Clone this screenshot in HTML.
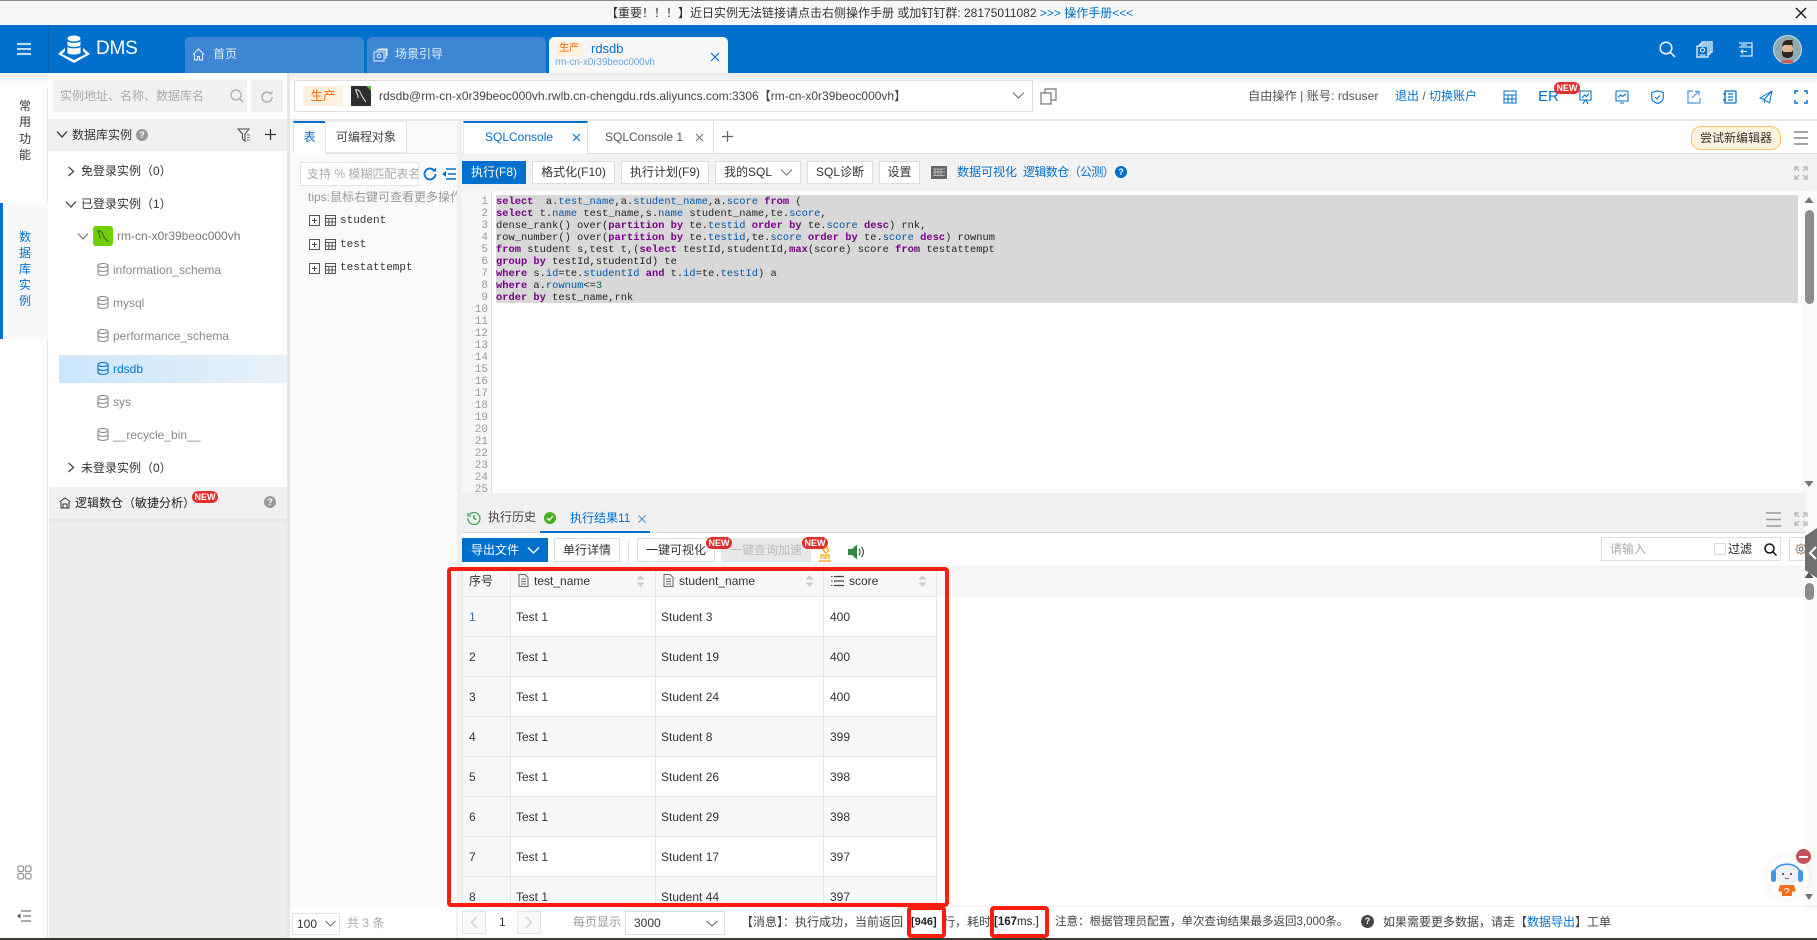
<!DOCTYPE html>
<html lang="zh"><head><meta charset="utf-8"><title>DMS</title>
<style>
*{box-sizing:border-box}
html,body{margin:0;padding:0;width:1817px;height:940px;overflow:hidden;background:#fff;font-family:"Liberation Sans","Noto Sans CJK SC",sans-serif;font-size:12px;color:#333}
.a,.t,svg{position:absolute}
.t{white-space:nowrap;line-height:16px}
.btn{position:absolute;top:161px;height:23px;background:#fff;border:1px solid #ddd;text-align:center;line-height:21px;white-space:nowrap;color:#333;font-size:12px}
.new{position:absolute;width:26px;height:12px;border-radius:6px;background:#e0302c;color:#fff;font-size:9px;font-weight:bold;line-height:12px;text-align:center}
.b{color:#0070cc}
.g{color:#888}
.hl{position:absolute;background:#e3e6ec}
.cell{position:absolute;white-space:nowrap;line-height:16px;color:#333}
.sql{position:absolute;left:496px;margin-top:1px;white-space:pre;font-family:"Liberation Mono",monospace;font-size:10.4px;line-height:12px;color:#222;height:12px}
.sql b{color:#708}.sql i{font-style:normal;color:#05a}.sql u{text-decoration:none;color:#164}
.ln{position:absolute;left:462px;margin-top:1px;width:26px;text-align:right;color:#999;font-family:"Liberation Mono",monospace;font-size:11px;line-height:12px;height:12px}
.red{position:absolute;border:4.5px solid #fb1d10;border-radius:4px}
</style></head><body>

<!-- notice -->
<div class="a" style="left:0;top:0;width:1817px;height:25px;background:#f7f7f7;border-top:1px solid #888"></div>
<div class="t" style="left:606px;top:5px;font-size:12px;color:#333">【重要！！！】近日实例无法链接请点击右侧操作手册 或加钉钉群: 28175011082 <span class="b">&gt;&gt;&gt; 操作手册&lt;&lt;&lt;</span></div>
<svg style="left:1795px;top:7px" width="12" height="12" viewBox="0 0 12 12"><path d="M1 1L11 11M11 1L1 11" stroke="#222" stroke-width="1.5" fill="none"/></svg>

<!-- header -->
<div class="a" style="left:0;top:25px;width:1817px;height:48px;background:#0070cc"></div>
<div class="a" style="left:48px;top:25px;width:1px;height:48px;background:#0f63ad"></div>
<svg style="left:17px;top:42px" width="15" height="14" viewBox="0 0 15 14"><path d="M0 2H14M0 7H14M0 12H14" stroke="#fff" stroke-width="1.6"/></svg>
<svg style="left:58px;top:35px" width="33" height="28" viewBox="0 0 33 28" fill="#fff"><ellipse cx="16" cy="3.5" rx="6.5" ry="3"/><path d="M9.5 6c1 2.500 12 2.500 13 0v4c-1 2.500-12 2.500-13 0z"/><path d="M9.500 11.500c1 2.500 12 2.500 13 0V18c-1 2-12 2-13 0z"/><path d="M7 13L0 19l16 9 16-9-7-6v3l3 3-12 6-12-6 3-3z"/></svg>
<div class="t" style="left:96px;top:37px;font-size:19px;line-height:24px;color:#fff;letter-spacing:-.2px">DMS</div>

<div class="a" style="left:185px;top:37px;width:179px;height:36px;background:#3c86d3;border-radius:5px 5px 0 0"></div>
<svg style="left:192px;top:48px" width="13" height="13" viewBox="0 0 13 13"><path d="M1 6.500L6.500 1 12 6.500M2.500 6v6h3V8.500h2V12h3V6" stroke="#e6f0fa" fill="none" stroke-width="1.100"/></svg>
<div class="t" style="left:213px;top:46px;font-size:12px;color:#e3eefa">首页</div>
<div class="a" style="left:367px;top:37px;width:179px;height:36px;background:#3c86d3;border-radius:5px 5px 0 0"></div>
<svg style="left:373px;top:48px" width="15" height="14" viewBox="0 0 15 14"><path d="M1 4h10v9H1zM4 4V2h9v8h-2M6 2V1h8v7" stroke="#e6f0fa" fill="none"/><circle cx="6" cy="8" r="1.800" stroke="#e6f0fa" fill="none"/></svg>
<div class="t" style="left:395px;top:46px;font-size:12px;color:#e3eefa">场景引导</div>
<div class="a" style="left:549px;top:37px;width:179px;height:36px;background:#f7f7f7;border-radius:5px 5px 0 0"></div>
<div class="a" style="left:555px;top:42px;width:28px;height:14px;background:#fff1e0;color:#f60;font-size:10px;line-height:14px;text-align:center">生产</div>
<div class="t" style="left:591px;top:41px;font-size:13px;color:#0070cc">rdsdb</div>
<div class="t" style="left:555px;top:55px;font-size:10px;color:#6aa9de;letter-spacing:-.15px">rm-cn-x0r39beoc000vh</div>
<svg style="left:710px;top:52px" width="10" height="10" viewBox="0 0 10 10"><path d="M1 1L9 9M9 1L1 9" stroke="#0070cc" stroke-width="1.200"/></svg>

<svg style="left:1659px;top:41px" width="17" height="17" viewBox="0 0 17 17"><circle cx="7" cy="7" r="5.800" stroke="#fff" stroke-width="1.500" fill="none"/><path d="M11 11L16 16" stroke="#fff" stroke-width="1.500"/></svg>
<svg style="left:1696px;top:41px" width="17" height="17" viewBox="0 0 17 17"><path d="M1 5h11v11H1zM4 5V3h10v10h-2M6 3V1h10v10h-2" stroke="#fff" fill="none" stroke-width="1.200"/><circle cx="6.500" cy="9" r="2" stroke="#fff" fill="none"/><path d="M3.500 14h6" stroke="#fff"/></svg>
<svg style="left:1738px;top:42px" width="15" height="15" viewBox="0 0 15 15"><path d="M1 1h13v13H2M1 5h13M3 3h6M9 9.500H3M5 7.500L3 9.500l2 2" stroke="#fff" fill="none" stroke-width="1.100"/></svg>
<svg style="left:1773px;top:35px" width="29" height="29" viewBox="0 0 29 29"><circle cx="14.500" cy="14.500" r="14" fill="#8fa9ad" stroke="#cfe0ea"/><path d="M8 27c1-3 12-3 13 0-3 2-10 2-13 0z" fill="#d2554f"/><path d="M9 10c0-3 3-5 5-5h5l-1 2c1 1 2 2 2 4v5c0 5-2 7-5.500 7S9 21 9 16z" fill="#e4b48f"/><path d="M9 12c0-5 3-7 6-7h5l-1 2c1 1 1 3 1 5l-1-2h-8z" fill="#2a2626"/><path d="M9 15c1 2 2 2 3 2h5c1 0 2 0 3-2v3c0 4-3 5-5.500 5S9 22 9 18z" fill="#2a2626"/></svg>

<!-- rail -->
<div class="a" style="left:0;top:73px;width:48px;height:865px;background:#fff;border-right:1px solid #e6e6e6"></div>
<div class="a" style="left:0;top:73px;width:48px;height:14px;background:linear-gradient(#eee,#fff)"></div>
<div class="a" style="left:0;top:203px;width:48px;height:136px;background:#f9f9f9"></div>
<div class="a" style="left:0;top:203px;width:3px;height:136px;background:#0070cc"></div>
<div class="t" style="left:19px;top:98px;width:13px;font-size:12px;line-height:16.300px;white-space:normal;color:#333">常用功能</div>
<div class="t" style="left:19px;top:229px;width:13px;font-size:12px;line-height:16.100px;white-space:normal;color:#0070cc">数据库实例</div>
<svg style="left:17px;top:865px" width="15" height="15" viewBox="0 0 15 15"><g stroke="#999" stroke-width="1.300" fill="none"><rect x="1" y="1" width="5.500" height="5.500" rx="1.500"/><rect x="8.500" y="1" width="5.500" height="5.500" rx="1.500"/><rect x="1" y="8.500" width="5.500" height="5.500" rx="1.500"/><rect x="8.500" y="8.500" width="5.500" height="5.500" rx="1.500"/></g></svg>
<svg style="left:17px;top:910px" width="15" height="12" viewBox="0 0 15 12"><path d="M4 1H14M6 6H14M4 11H14" stroke="#555"/><path d="M0 6l3.500-2.500v5z" fill="#555"/></svg>

<!-- sidebar -->
<div class="a" style="left:48px;top:73px;width:239px;height:865px;background:#fff"></div>
<div class="a" style="left:53px;top:80px;width:194px;height:32px;background:#f1f1f1"></div>
<div class="t" style="left:60px;top:88px;color:#aaa;font-size:12px">实例地址、名称、数据库名</div>
<svg style="left:230px;top:89px" width="14" height="14" viewBox="0 0 14 14"><circle cx="6" cy="6" r="5" stroke="#aaa" stroke-width="1.300" fill="none"/><path d="M9.500 9.500L13 13" stroke="#aaa" stroke-width="1.300"/></svg>
<div class="a" style="left:251px;top:80px;width:32px;height:32px;background:#f1f1f1"></div>
<svg style="left:260px;top:90px" width="14" height="14" viewBox="0 0 14 14"><path d="M12 7a5 5 0 1 1-1.500-3.500" stroke="#aaa" stroke-width="1.400" fill="none"/><path d="M9 4.200h3.500V.8" fill="#aaa"/></svg>
<div class="a" style="left:48px;top:119px;width:239px;height:32px;background:#f0f0f0"></div>
<svg style="left:56px;top:130px" width="12" height="9" viewBox="0 0 12 9"><path d="M1 1.500L6 7l5-5.500" stroke="#333" stroke-width="1.300" fill="none"/></svg>
<div class="t" style="left:72px;top:127px;font-size:12px;color:#333">数据库实例</div>
<div class="a" style="left:136px;top:129px;width:12px;height:12px;border-radius:50%;background:#999;color:#fff;font-size:9px;font-weight:bold;text-align:center;line-height:12px">?</div>
<svg style="left:237px;top:128px" width="14" height="14" viewBox="0 0 14 14"><path d="M1 1h11L8 6v7L5.500 11V6z" stroke="#444" fill="none"/><path d="M10 7h3M10 9.500h3M10 12h3" stroke="#777"/></svg>
<svg style="left:265px;top:129px" width="11" height="11" viewBox="0 0 11 11"><path d="M5.500 0V11M0 5.500H11" stroke="#333" stroke-width="1.300"/></svg>

<svg style="left:67px;top:166px" width="8" height="11" viewBox="0 0 8 11"><path d="M1.500 1L6.500 5.500 1.500 10" stroke="#444" stroke-width="1.300" fill="none"/></svg>
<div class="t" style="left:81px;top:163px">免登录实例（0）</div>
<svg style="left:65px;top:200px" width="12" height="9" viewBox="0 0 12 9"><path d="M1 1.500L6 7l5-5.500" stroke="#444" stroke-width="1.300" fill="none"/></svg>
<div class="t" style="left:81px;top:196px">已登录实例（1）</div>
<svg style="left:77px;top:232px" width="12" height="9" viewBox="0 0 12 9"><path d="M1 1.500L6 7l5-5.500" stroke="#777" stroke-width="1.200" fill="none"/></svg>
<div class="a" style="left:93px;top:226px;width:20px;height:20px;border-radius:3px;background:#6fd000"></div>
<svg style="left:95px;top:228px" width="16" height="16" viewBox="0 0 16 16"><path d="M2 3c3-1 5 1 6 4s3 4 5 7M3 3c0 3 2 2 2 8" stroke="#3d6b12" stroke-width="1.200" fill="none"/></svg>
<div class="t" style="left:117px;top:228px;font-size:12px;color:#777">rm-cn-x0r39beoc000vh</div>

<div class="a" style="left:59px;top:355px;width:228px;height:28px;background:linear-gradient(90deg,#cbe6fc,#e8f1f9)"></div>
<svg style="left:0;top:0;width:0;height:0"><defs><g id="db" fill="none" stroke-width="1.100"><ellipse cx="6" cy="2.500" rx="5" ry="2"/><path d="M1 2.500v8c0 2.500 10 2.500 10 0v-8M1 6.500c0 2.500 10 2.500 10 0"/></g></defs></svg>
<svg style="left:97px;top:263px" width="12" height="13" stroke="#888"><use href="#db"/></svg>
<div class="t" style="left:113px;top:262px;font-size:12px;color:#888">information_schema</div>
<svg style="left:97px;top:296px" width="12" height="13" stroke="#888"><use href="#db"/></svg>
<div class="t" style="left:113px;top:295px;font-size:12px;color:#888">mysql</div>
<svg style="left:97px;top:329px" width="12" height="13" stroke="#888"><use href="#db"/></svg>
<div class="t" style="left:113px;top:328px;font-size:12px;color:#888">performance_schema</div>
<svg style="left:97px;top:362px" width="12" height="13" stroke="#0070cc"><use href="#db"/></svg>
<div class="t" style="left:113px;top:361px;font-size:12px;color:#0070cc">rdsdb</div>
<svg style="left:97px;top:395px" width="12" height="13" stroke="#888"><use href="#db"/></svg>
<div class="t" style="left:113px;top:394px;font-size:12px;color:#888">sys</div>
<svg style="left:97px;top:428px" width="12" height="13" stroke="#888"><use href="#db"/></svg>
<div class="t" style="left:113px;top:427px;font-size:12px;color:#888">__recycle_bin__</div>
<svg style="left:67px;top:462px" width="8" height="11" viewBox="0 0 8 11"><path d="M1.500 1L6.500 5.500 1.500 10" stroke="#444" stroke-width="1.300" fill="none"/></svg>
<div class="t" style="left:81px;top:460px">未登录实例（0）</div>

<div class="a" style="left:49px;top:487px;width:238px;height:32px;background:#f0f0f0"></div>
<svg style="left:59px;top:497px" width="12" height="12" viewBox="0 0 12 12"><path d="M.5 5L6 1l5.500 4M2 5v6h8V5M4 11V7h4v4" stroke="#333" fill="none"/></svg>
<div class="t" style="left:75px;top:495px;color:#222">逻辑数仓（敏捷分析）</div>
<div class="new" style="left:192px;top:491px">NEW</div>
<div class="a" style="left:264px;top:496px;width:12px;height:12px;border-radius:50%;background:#999;color:#fff;font-size:9px;font-weight:bold;text-align:center;line-height:12px">?</div>
<div class="a" style="left:49px;top:519px;width:238px;height:419px;background:#ececec;border-top:2px solid #e4e4e4"></div>
<div class="a" style="left:287px;top:73px;width:3px;height:865px;background:#e6e6e6"></div>

<!-- connection bar -->
<div class="a" style="left:290px;top:73px;width:1527px;height:46px;background:#fff"></div>
<div class="a" style="left:290px;top:73px;width:1527px;height:12px;background:linear-gradient(#eaeaea,#fff)"></div>
<div class="a" style="left:294px;top:80px;width:739px;height:32px;background:#fff;border:1px solid #ddd;border-radius:2px"></div>
<div class="a" style="left:303px;top:86px;width:40px;height:20px;background:#fff1e0;color:#ff6a00;font-size:12.500px;line-height:20px;text-align:center">生产</div>
<div class="a" style="left:351px;top:86px;width:20px;height:20px;background:#2e2e2e"></div>
<svg style="left:351px;top:86px" width="20" height="20" viewBox="0 0 20 20"><path d="M15 0h5v5z" fill="#5cb33c"/><path d="M4 4c3-1 5 1 6 4s3 5 5 8M5 4c0 3 2 3 2 8" stroke="#ddd" stroke-width="1.100" fill="none"/></svg>
<div class="t" style="left:379px;top:88px;font-size:12px;color:#444">rdsdb@rm-cn-x0r39beoc000vh.rwlb.cn-chengdu.rds.aliyuncs.com:3306【rm-cn-x0r39beoc000vh】</div>
<svg style="left:1012px;top:91px" width="13" height="9" viewBox="0 0 13 9"><path d="M1 1.500L6.500 7 12 1.500" stroke="#777" stroke-width="1.200" fill="none"/></svg>
<svg style="left:1040px;top:88px" width="17" height="17" viewBox="0 0 17 17"><path d="M1 5h10v11H1zM5 5V1h11v11h-5" stroke="#777" fill="none" stroke-width="1.200"/></svg>

<div class="t" style="left:1248px;top:88px;font-size:12.200px;color:#555">自由操作 | 账号: rdsuser</div>
<div class="t" style="left:1395px;top:88px;font-size:12px;color:#0070cc">退出 <span style="color:#555">/</span> 切换账户</div>
<svg style="left:1503px;top:90px" width="14" height="14" viewBox="0 0 14 14"><path d="M1 1h12v12H1zM1 5h12M1 9h12M5 5v8M9 5v8" stroke="#0070cc" fill="none"/></svg>
<div class="t" style="left:1538px;top:89px;font-size:15px;color:#0070cc">ER</div>
<svg style="left:1579px;top:90px" width="13" height="15" viewBox="0 0 13 15"><path d="M1 1h11v9H1zM4 14l2-4M9 14l-2-4M3 8l2.500-3 2 1.500L10 3.500" stroke="#0070cc" fill="none" stroke-width="1.100"/></svg>
<div class="new" style="left:1554px;top:82px">NEW</div>
<svg style="left:1615px;top:90px" width="14" height="14" viewBox="0 0 14 14"><path d="M2 1h10a1 1 0 0 1 1 1v9H1V2a1 1 0 0 1 1-1zM5 13h4M3 7.500l2.500-2.500 2 1.500L11 4" stroke="#0070cc" fill="none" stroke-width="1.100"/></svg>
<svg style="left:1651px;top:90px" width="13" height="14" viewBox="0 0 13 14"><path d="M6.500 .8l5.700 1.700v6c0 2.500-3 4-5.700 5-2.700-1-5.700-2.500-5.700-5v-6zM4 7l2 2 3-3.500" stroke="#0070cc" fill="none" stroke-width="1.100"/></svg>
<svg style="left:1687px;top:90px" width="14" height="14" viewBox="0 0 14 14"><path d="M6 1H1v12h12V8M5 8l6-6M8 1.500h4v4" stroke="#4d9bdc" fill="none" stroke-width="1.200"/></svg>
<svg style="left:1723px;top:90px" width="14" height="14" viewBox="0 0 14 14"><path d="M2 1h10a1 1 0 0 1 1 1v10a1 1 0 0 1-1 1H2zM5 4h5M5 7h5M5 10h5M0 4h3M0 10h3" stroke="#0070cc" fill="none" stroke-width="1.300"/></svg>
<svg style="left:1759px;top:90px" width="14" height="14" viewBox="0 0 14 14"><path d="M13 1L1 8l4 1.500M13 1l-2.500 12L5 9.500 5.500 13M13 1L5 9.500" stroke="#0070cc" fill="none"/></svg>
<svg style="left:1794px;top:90px" width="14" height="14" viewBox="0 0 14 14"><path d="M1 4V1h3M10 1h3v3M13 10v3h-3M4 13H1v-3" stroke="#0070cc" fill="none" stroke-width="1.500"/></svg>

<div class="a" style="left:290px;top:119px;width:1527px;height:2px;background:#e8e8e8"></div>

<!-- left pane -->
<div class="a" style="left:290px;top:121px;width:168px;height:787px;background:#fafafa"></div>
<div class="a" style="left:293px;top:121px;width:32px;height:33px;background:#fff;border-top:2px solid #0070cc;border-left:1px solid #e4e4e4;color:#0070cc;text-align:center;line-height:29px;font-size:12px">表</div>
<div class="a" style="left:325px;top:121px;width:82px;height:32px;background:#fff;border:1px solid #e4e4e4;border-top:1px solid #eee;text-align:center;line-height:30px;font-size:12px;color:#444">可编程对象</div>
<div class="a" style="left:325px;top:153px;width:132px;height:1px;background:#e4e4e4"></div>
<div class="a" style="left:300px;top:162px;width:119px;height:24px;background:#fff;border:1px solid #e2e2e2;overflow:hidden;color:#aaa;line-height:22px;padding-left:6px;white-space:nowrap;font-size:12px">支持 % 模糊匹配表名</div>
<svg style="left:423px;top:167px" width="14" height="14" viewBox="0 0 14 14"><path d="M12.500 7a5.500 5.500 0 1 1-1.600-3.900" stroke="#0070cc" stroke-width="1.800" fill="none"/><path d="M9 4.500h4.200V.5z" fill="#0070cc"/></svg>
<svg style="left:442px;top:168px" width="14" height="12" viewBox="0 0 14 12"><path d="M4 1H14M6 6H14M4 11H14" stroke="#0070cc" stroke-width="1.500"/><path d="M0 6l4-3v6z" fill="#0070cc"/></svg>
<div class="a" style="left:308px;top:189px;width:149px;height:16px;overflow:hidden;white-space:nowrap;color:#999;line-height:16px;font-size:12px">tips:鼠标右键可查看更多操作</div>
<svg style="left:0;top:0;width:0;height:0"><defs><g id="pl" fill="none" stroke="#555"><rect x=".5" y=".5" width="10" height="10"/><path d="M3 5.500h5M5.500 3v5"/></g><g id="tb" fill="none" stroke="#555"><rect x=".5" y=".5" width="10" height="10"/><path d="M.5 3.500h10M.5 7h10M3.800 3.500v7M7.200 3.500v7"/></g></defs></svg>
<svg style="left:309px;top:215px" width="11" height="11"><use href="#pl"/></svg><svg style="left:325px;top:215px" width="11" height="11"><use href="#tb"/></svg>
<div class="t" style="left:340px;top:213px;font-family:'Liberation Mono',monospace;font-size:11px;color:#333">student</div>
<svg style="left:309px;top:239px" width="11" height="11"><use href="#pl"/></svg><svg style="left:325px;top:239px" width="11" height="11"><use href="#tb"/></svg>
<div class="t" style="left:340px;top:237px;font-family:'Liberation Mono',monospace;font-size:11px;color:#333">test</div>
<svg style="left:309px;top:263px" width="11" height="11"><use href="#pl"/></svg><svg style="left:325px;top:263px" width="11" height="11"><use href="#tb"/></svg>
<div class="t" style="left:340px;top:260px;font-family:'Liberation Mono',monospace;font-size:11px;color:#333">testattempt</div>
<div class="a" style="left:457px;top:121px;width:5px;height:787px;background:#f0f0f0"></div>

<!-- console tabs -->
<div class="a" style="left:462px;top:121px;width:1355px;height:33px;background:#fff;border-bottom:1px solid #ddd"></div>
<div class="a" style="left:463px;top:121px;width:125px;height:33px;background:#fff;border:1px solid #e4e4e4;border-top:2px solid #0070cc;border-bottom:0"></div>
<div class="t" style="left:485px;top:129px;color:#0070cc;font-size:12px">SQLConsole</div>
<svg style="left:572px;top:133px" width="9" height="9" viewBox="0 0 9 9"><path d="M1 1L8 8M8 1L1 8" stroke="#0070cc" stroke-width="1.100"/></svg>
<div class="t" style="left:605px;top:129px;color:#555;font-size:12px">SQLConsole 1</div>
<svg style="left:695px;top:133px" width="9" height="9" viewBox="0 0 9 9"><path d="M1 1L8 8M8 1L1 8" stroke="#777" stroke-width="1.100"/></svg>
<div class="a" style="left:713px;top:121px;width:1px;height:32px;background:#ddd"></div>
<svg style="left:722px;top:131px" width="11" height="11" viewBox="0 0 11 11"><path d="M5.500 0V11M0 5.500H11" stroke="#666" stroke-width="1.300"/></svg>
<div class="a" style="left:1691px;top:126px;width:90px;height:24px;border-radius:10px;background:#fff3e0;border:1px solid #fdc66a;text-align:center;line-height:22px;color:#333;font-size:12px">尝试新编辑器</div>
<svg style="left:1794px;top:131px" width="14" height="14" viewBox="0 0 14 14"><path d="M0 1H14M0 7H14M0 13H14" stroke="#888" stroke-width="1.400"/></svg>

<!-- toolbar -->
<div class="a" style="left:462px;top:154px;width:1355px;height:37px;background:#f2f2f2"></div>
<div class="btn" style="left:462px;width:64px;background:#0070cc;border-color:#0070cc;color:#fff">执行(F8)</div>
<div class="btn" style="left:532px;width:83px">格式化(F10)</div>
<div class="btn" style="left:621px;width:88px">执行计划(F9)</div>
<div class="btn" style="left:715px;width:86px;text-align:left;padding-left:8px">我的SQL</div>
<svg style="left:780px;top:168px" width="13" height="9" viewBox="0 0 13 9"><path d="M1 1.500L6.500 7 12 1.500" stroke="#777" stroke-width="1.200" fill="none"/></svg>
<div class="btn" style="left:807px;width:66px">SQL诊断</div>
<div class="btn" style="left:879px;width:41px">设置</div>
<svg style="left:931px;top:166px" width="16" height="13" viewBox="0 0 16 13"><rect width="16" height="13" fill="#666"/><path d="M2 3h12M2 6h12M2 9.500h12M4 3v7M7 3v7M10 3v7" stroke="#ccc" stroke-width=".8"/></svg>
<div class="t" style="left:957px;top:164px;color:#0070cc">数据可视化</div>
<div class="t" style="left:1023px;top:164px;color:#0070cc;letter-spacing:-.6px">逻辑数仓（公测）</div>
<div class="a" style="left:1115px;top:166px;width:12px;height:12px;border-radius:50%;background:#0070cc;color:#fff;font-size:9px;font-weight:bold;text-align:center;line-height:12px">?</div>
<svg style="left:1794px;top:166px" width="14" height="14" viewBox="0 0 14 14"><path d="M1 5V1h4M9 1h4v4M13 9v4H9M5 13H1V9M1 1l4 4M13 1L9 5M13 13L9 9M1 13l4-4" stroke="#aaa" fill="none"/></svg>

<!-- editor -->
<div class="a" style="left:462px;top:191px;width:1344px;height:302px;background:#fff"></div>
<div class="a" style="left:462px;top:191px;width:30px;height:302px;background:#f7f7f7;border-right:1px solid #ddd"></div>
<div class="a" style="left:496px;top:195px;width:1302px;height:108px;background:#d8d8d8"></div>
<div class="ln" style="top:195px">1</div><div class="ln" style="top:207px">2</div><div class="ln" style="top:219px">3</div><div class="ln" style="top:231px">4</div><div class="ln" style="top:243px">5</div><div class="ln" style="top:255px">6</div><div class="ln" style="top:267px">7</div><div class="ln" style="top:279px">8</div><div class="ln" style="top:291px">9</div><div class="ln" style="top:303px">10</div><div class="ln" style="top:315px">11</div><div class="ln" style="top:327px">12</div><div class="ln" style="top:339px">13</div><div class="ln" style="top:351px">14</div><div class="ln" style="top:363px">15</div><div class="ln" style="top:375px">16</div><div class="ln" style="top:387px">17</div><div class="ln" style="top:399px">18</div><div class="ln" style="top:411px">19</div><div class="ln" style="top:423px">20</div><div class="ln" style="top:435px">21</div><div class="ln" style="top:447px">22</div><div class="ln" style="top:459px">23</div><div class="ln" style="top:471px">24</div><div class="ln" style="top:483px;height:9px;overflow:hidden">25</div>
<div class="sql" style="top:195px"><b>select</b>  a.<i>test_name</i>,a.<i>student_name</i>,a.<i>score</i> <b>from</b> (</div>
<div class="sql" style="top:207px"><b>select</b> t.<i>name</i> test_name,s.<i>name</i> student_name,te.<i>score</i>,</div>
<div class="sql" style="top:219px">dense_rank() over(<b>partition by</b> te.<i>testid</i> <b>order by</b> te.<i>score</i> <b>desc</b>) rnk,</div>
<div class="sql" style="top:231px">row_number() over(<b>partition by</b> te.<i>testid</i>,te.<i>score</i> <b>order by</b> te.<i>score</i> <b>desc</b>) rownum</div>
<div class="sql" style="top:243px"><b>from</b> student s,test t,(<b>select</b> testId,studentId,<b>max</b>(score) score <b>from</b> testattempt</div>
<div class="sql" style="top:255px"><b>group by</b> testId,studentId) te</div>
<div class="sql" style="top:267px"><b>where</b> s.<i>id</i>=te.<i>studentId</i> <b>and</b> t.<i>id</i>=te.<i>testId</i>) a</div>
<div class="sql" style="top:279px"><b>where</b> a.<i>rownum</i>&lt;=<u>3</u></div>
<div class="sql" style="top:291px"><b>order by</b> test_name,rnk</div>
<!-- scrollbar -->
<div class="a" style="left:1802px;top:191px;width:15px;height:717px;background:#fafafa"></div>
<svg style="left:1803px;top:196px" width="12" height="8"><path d="M1.500 7L6 1l4.500 6z" fill="#777"/></svg>
<div class="a" style="left:1805px;top:210px;width:9px;height:94px;border-radius:5px;background:#8c8c8c"></div>
<svg style="left:1803px;top:480px" width="12" height="8"><path d="M1.500 1L6 7l4.500-6z" fill="#777"/></svg>

<!-- results header -->
<div class="a" style="left:462px;top:493px;width:1343px;height:40px;background:#f0f0f0;border-bottom:1px solid #ddd"></div>
<svg style="left:467px;top:511px" width="14" height="14" viewBox="0 0 14 14"><path d="M2.500 3.500A6 6 0 1 1 1 7M1 2v3h3M7 4v3.500l2.500 1" stroke="#3aa655" stroke-width="1.300" fill="none"/></svg>
<div class="t" style="left:488px;top:509px;color:#444">执行历史</div>
<div class="a" style="left:544px;top:512px;width:12px;height:12px;border-radius:50%;background:#4aae20"></div>
<svg style="left:544px;top:512px" width="12" height="12" viewBox="0 0 12 12"><path d="M3 6l2.200 2.200L9 4" stroke="#fff" stroke-width="1.300" fill="none"/></svg>
<div class="t" style="left:570px;top:510px;color:#0070cc">执行结果11</div>
<svg style="left:638px;top:515px" width="8" height="8" viewBox="0 0 8 8"><path d="M.5.500L7.500 7.500M7.500.500L.5 7.500" stroke="#4d8cc0"/></svg>
<div class="a" style="left:540px;top:531px;width:110px;height:2px;background:#0070cc"></div>
<svg style="left:1766px;top:512px" width="15" height="15" viewBox="0 0 15 15"><path d="M0 1H15M0 7.500H15M0 14H15" stroke="#999" stroke-width="1.500"/></svg>
<svg style="left:1794px;top:512px" width="14" height="14" viewBox="0 0 14 14"><path d="M1 5V1h4M9 1h4v4M13 9v4H9M5 13H1V9M1 1l4 4M13 1L9 5M13 13L9 9M1 13l4-4" stroke="#aaa" fill="none"/></svg>

<!-- results toolbar -->
<div class="a" style="left:462px;top:533px;width:1343px;height:32px;background:#fff"></div>
<div class="a" style="left:462px;top:538px;width:86px;height:24px;background:#0070cc;color:#fff;line-height:24px;padding-left:9px">导出文件</div>
<svg style="left:527px;top:546px" width="13" height="9" viewBox="0 0 13 9"><path d="M1 1.500L6.500 7 12 1.500" stroke="#fff" stroke-width="1.500" fill="none"/></svg>
<div class="a" style="left:554px;top:538px;width:66px;height:24px;border:1px solid #ddd;text-align:center;line-height:22px">单行详情</div>
<div class="a" style="left:628px;top:541px;width:1px;height:21px;background:#ddd"></div>
<div class="a" style="left:637px;top:538px;width:78px;height:24px;border:1px solid #ddd;text-align:center;line-height:22px">一键可视化</div>
<div class="a" style="left:721px;top:538px;width:90px;height:24px;background:#e8e8e8;color:#bbb;text-align:center;line-height:24px">一键查询加速</div>
<div class="new" style="left:706px;top:537px">NEW</div>
<div class="new" style="left:802px;top:537px">NEW</div>
<svg style="left:818px;top:546px" width="14" height="16" viewBox="0 0 14 16"><path d="M1 15h12M3 13V9h3v4M8 13V9h3v4M5 4l3-3 3 3-3 3z" stroke="#f5a000" stroke-width="1.200" fill="none"/></svg>
<svg style="left:848px;top:544px" width="18" height="16" viewBox="0 0 18 16"><path d="M0 5h4L9 .5v15L4 11H0z" fill="#2e8b3a"/><path d="M11 5c1.500 1.500 1.500 4.500 0 6M13.500 3c2.500 2.500 2.500 7.500 0 10" stroke="#333" fill="none"/></svg>
<div class="a" style="left:1601px;top:537px;width:180px;height:24px;border:1px solid #ddd;background:#fff"></div>
<div class="t" style="left:1610px;top:541px;color:#aaa">请输入</div>
<div class="a" style="left:1714px;top:543px;width:12px;height:12px;border:1px solid #ddd;background:#fff"></div>
<div class="t" style="left:1728px;top:541px;color:#222">过滤</div>
<svg style="left:1764px;top:543px" width="13" height="13" viewBox="0 0 13 13"><circle cx="5.500" cy="5.500" r="4.500" stroke="#111" stroke-width="1.500" fill="none"/><path d="M9 9l3.500 3.500" stroke="#111" stroke-width="1.500"/></svg>
<div class="a" style="left:1789px;top:537px;width:24px;height:24px;border:1px solid #ddd;background:#fff"></div>
<svg style="left:1795px;top:543px" width="12" height="12" viewBox="0 0 12 12"><circle cx="6" cy="6" r="2" stroke="#555" fill="none"/><path d="M6 .8l1.500 1.500 2.200-.2.200 2.200L11.300 6l-1.400 1.700-.2 2.200-2.200-.2L6 11.200 4.500 9.700l-2.200.2-.2-2.200L.7 6l1.400-1.700.2-2.200 2.200.2z" stroke="#a86" fill="none"/></svg>

<!-- table -->
<div class="a" style="left:462px;top:565px;width:1343px;height:32px;background:#f7f7f7"></div>
<div class="a" style="left:462px;top:597px;width:1343px;height:311px;background:#fff"></div>
<div class="a" style="left:462px;top:565px;width:48px;height:343px;background:#f7f7f7"></div>
<div class="a" style="left:510px;top:637px;width:426px;height:40px;background:#f8f8f8"></div>
<div class="a" style="left:510px;top:717px;width:426px;height:40px;background:#f8f8f8"></div>
<div class="a" style="left:510px;top:797px;width:426px;height:40px;background:#f8f8f8"></div>
<div class="a" style="left:510px;top:877px;width:426px;height:31px;background:#f8f8f8"></div>
<div class="hl" style="left:462px;top:565px;width:1px;height:343px"></div><div class="hl" style="left:510px;top:565px;width:1px;height:343px"></div><div class="hl" style="left:655px;top:565px;width:1px;height:343px"></div><div class="hl" style="left:823px;top:565px;width:1px;height:343px"></div><div class="hl" style="left:936px;top:565px;width:1px;height:343px"></div>
<div class="hl" style="left:462px;top:596px;width:474px;height:1px"></div><div class="hl" style="left:462px;top:636px;width:474px;height:1px"></div><div class="hl" style="left:462px;top:676px;width:474px;height:1px"></div><div class="hl" style="left:462px;top:716px;width:474px;height:1px"></div><div class="hl" style="left:462px;top:756px;width:474px;height:1px"></div><div class="hl" style="left:462px;top:796px;width:474px;height:1px"></div><div class="hl" style="left:462px;top:836px;width:474px;height:1px"></div><div class="hl" style="left:462px;top:876px;width:474px;height:1px"></div>

<div class="cell" style="left:469px;top:573px">序号</div>
<svg style="left:518px;top:574px" width="11" height="13" viewBox="0 0 11 13"><path d="M1 .5h6l3 3v9H1zM3 5h5M3 7.500h5M3 10h5" stroke="#666" fill="none"/></svg>
<div class="cell" style="left:534px;top:573px">test_name</div>
<svg style="left:636px;top:574px" width="9" height="14"><path d="M.5 5.500L4.500 1l4 4.500zM.5 8.500l4 4.500 4-4.500z" fill="#ccc"/></svg>
<svg style="left:663px;top:574px" width="11" height="13" viewBox="0 0 11 13"><path d="M1 .5h6l3 3v9H1zM3 5h5M3 7.500h5M3 10h5" stroke="#666" fill="none"/></svg>
<div class="cell" style="left:679px;top:573px">student_name</div>
<svg style="left:805px;top:574px" width="9" height="14"><path d="M.5 5.500L4.500 1l4 4.500zM.5 8.500l4 4.500 4-4.500z" fill="#ccc"/></svg>
<svg style="left:831px;top:575px" width="13" height="12" viewBox="0 0 13 12"><path d="M3 1.500h10M3 6h10M3 10.500h10" stroke="#444" stroke-width="1.200"/><path d="M0 1h1.500v1H0zM0 5.500h1.500v1H0zM0 10h1.500v1H0z" fill="#444"/></svg>
<div class="cell" style="left:849px;top:573px">score</div>
<svg style="left:918px;top:574px" width="9" height="14"><path d="M.5 5.500L4.500 1l4 4.500zM.5 8.500l4 4.500 4-4.500z" fill="#ccc"/></svg>

<div class="cell" style="left:469px;top:609px;color:#3a6ea5">1</div><div class="cell" style="left:516px;top:609px">Test 1</div><div class="cell" style="left:661px;top:609px">Student 3</div><div class="cell" style="left:830px;top:609px">400</div>
<div class="cell" style="left:469px;top:649px">2</div><div class="cell" style="left:516px;top:649px">Test 1</div><div class="cell" style="left:661px;top:649px">Student 19</div><div class="cell" style="left:830px;top:649px">400</div>
<div class="cell" style="left:469px;top:689px">3</div><div class="cell" style="left:516px;top:689px">Test 1</div><div class="cell" style="left:661px;top:689px">Student 24</div><div class="cell" style="left:830px;top:689px">400</div>
<div class="cell" style="left:469px;top:729px">4</div><div class="cell" style="left:516px;top:729px">Test 1</div><div class="cell" style="left:661px;top:729px">Student 8</div><div class="cell" style="left:830px;top:729px">399</div>
<div class="cell" style="left:469px;top:769px">5</div><div class="cell" style="left:516px;top:769px">Test 1</div><div class="cell" style="left:661px;top:769px">Student 26</div><div class="cell" style="left:830px;top:769px">398</div>
<div class="cell" style="left:469px;top:809px">6</div><div class="cell" style="left:516px;top:809px">Test 1</div><div class="cell" style="left:661px;top:809px">Student 29</div><div class="cell" style="left:830px;top:809px">398</div>
<div class="cell" style="left:469px;top:849px">7</div><div class="cell" style="left:516px;top:849px">Test 1</div><div class="cell" style="left:661px;top:849px">Student 17</div><div class="cell" style="left:830px;top:849px">397</div>
<div class="cell" style="left:469px;top:889px">8</div><div class="cell" style="left:516px;top:889px">Test 1</div><div class="cell" style="left:661px;top:889px">Student 44</div><div class="cell" style="left:830px;top:889px">397</div>

<!-- handle & scrollbar -->
<svg style="left:1805px;top:528px" width="12" height="50" viewBox="0 0 12 50"><path d="M12 0L0 8v34l12 8z" fill="#707070"/><path d="M11 19l-6 6 6 6" stroke="#fff" stroke-width="2" fill="none"/></svg>
<svg style="left:1803px;top:571px" width="12" height="8"><path d="M1.500 7L6 1l4.500 6z" fill="#555"/></svg>
<div class="a" style="left:1805px;top:583px;width:9px;height:17px;border-radius:5px;background:#8c8c8c"></div>

<!-- bottom bar -->
<div class="a" style="left:290px;top:908px;width:1527px;height:30px;background:#fff"></div>
<div class="a" style="left:458px;top:906px;width:1359px;height:1px;background:#eee"></div>
<div class="a" style="left:292px;top:913px;width:48px;height:22px;border:1px solid #e2e2e2;line-height:20px;padding-left:4px;color:#333">100</div>
<svg style="left:325px;top:920px" width="11" height="7" viewBox="0 0 11 7"><path d="M.5 1L5.500 6l5-5" stroke="#777" fill="none" stroke-width="1.200"/></svg>
<div class="t" style="left:347px;top:915px;color:#aaa">共 3 条</div>
<div class="a" style="left:456px;top:906px;width:2px;height:32px;background:#f0f0f0"></div>
<div class="a" style="left:462px;top:911px;width:24px;height:23px;border:1px solid #e6e6e6;background:#fafafa"></div>
<svg style="left:470px;top:916px" width="8" height="13" viewBox="0 0 8 13"><path d="M7 1L1.500 6.500 7 12" stroke="#ccc" stroke-width="1.300" fill="none"/></svg>
<div class="t" style="left:499px;top:914px;color:#333">1</div>
<div class="a" style="left:517px;top:911px;width:24px;height:23px;border:1px solid #e6e6e6;background:#fafafa"></div>
<svg style="left:525px;top:916px" width="8" height="13" viewBox="0 0 8 13"><path d="M1 1l5.500 5.500L1 12" stroke="#ccc" stroke-width="1.300" fill="none"/></svg>
<div class="t" style="left:573px;top:914px;color:#999">每页显示</div>
<div class="a" style="left:625px;top:911px;width:100px;height:24px;border:1px solid #ddd;line-height:22px;padding-left:8px;color:#333">3000</div>
<svg style="left:706px;top:920px" width="12" height="7" viewBox="0 0 12 7"><path d="M.5 1L6 6l5.500-5" stroke="#777" fill="none" stroke-width="1.200"/></svg>
<div class="t" style="left:741px;top:914px;font-size:12px;color:#444">【消息】：执行成功，当前返回</div>
<div class="t" style="left:911px;top:914px;font-size:11px;color:#222;font-weight:bold">[946]</div>
<div class="t" style="left:943px;top:914px;font-size:12px;color:#444">行，耗时</div>
<div class="t" style="left:994px;top:914px;font-size:11.500px;color:#222"><b>[167</b>ms.]</div>
<div class="t" style="left:1055px;top:914px;font-size:11.500px;color:#444">注意：根据管理员配置，单次查询结果最多返回3,000条。</div>
<div class="a" style="left:1361px;top:915px;width:13px;height:13px;border-radius:50%;background:#444;color:#fff;font-size:9px;font-weight:bold;text-align:center;line-height:13px">?</div>
<div class="t" style="left:1383px;top:914px;font-size:12px;color:#444">如果需要更多数据，请走【<span class="b">数据导出</span>】工单</div>

<!-- red annotation boxes -->
<div class="red" style="left:447px;top:567px;width:502px;height:340px"></div>
<div class="red" style="left:907px;top:906px;width:39px;height:32px"></div>
<div class="red" style="left:990px;top:906px;width:59px;height:32px"></div>

<!-- bot -->
<div class="a" style="left:1767px;top:856px;width:42px;height:42px;border-radius:50%;background:#fff;box-shadow:0 0 10px rgba(0,0,0,.08)"></div>
<svg style="left:1769px;top:859px" width="38" height="40" viewBox="0 0 38 40"><path d="M5 15C5 2 31 2 31 15" stroke="#3f97e8" stroke-width="1.800" fill="none"/><rect x="2" y="11" width="5" height="12" rx="2.500" fill="#3f97e8"/><rect x="29" y="11" width="5" height="12" rx="2.500" fill="#3f97e8"/><ellipse cx="18" cy="16" rx="11" ry="10" fill="#eef0f3"/><circle cx="14" cy="15" r="1" fill="#333"/><circle cx="22" cy="15" r="1" fill="#333"/><path d="M16 19q2 1.500 4 0" stroke="#333" fill="none" stroke-width=".7"/><path d="M11 26h14l2 6-4 1v4H13v-4l-4-1z" fill="#f0701e"/><path d="M15 31q3-3 5 0-2 3-3 3" stroke="#fff" fill="none"/></svg>
<div class="a" style="left:1796px;top:849px;width:15px;height:15px;border-radius:50%;background:#c4525a"></div>
<div class="a" style="left:1799px;top:855.500px;width:9px;height:2px;background:#fff"></div>
<svg style="left:1805px;top:894px" width="8" height="6"><path d="M0 0h8L4 6z" fill="#777"/></svg>

<div class="a" style="left:0;top:938px;width:1817px;height:2px;background:#3a3a2a"></div>
</body></html>
